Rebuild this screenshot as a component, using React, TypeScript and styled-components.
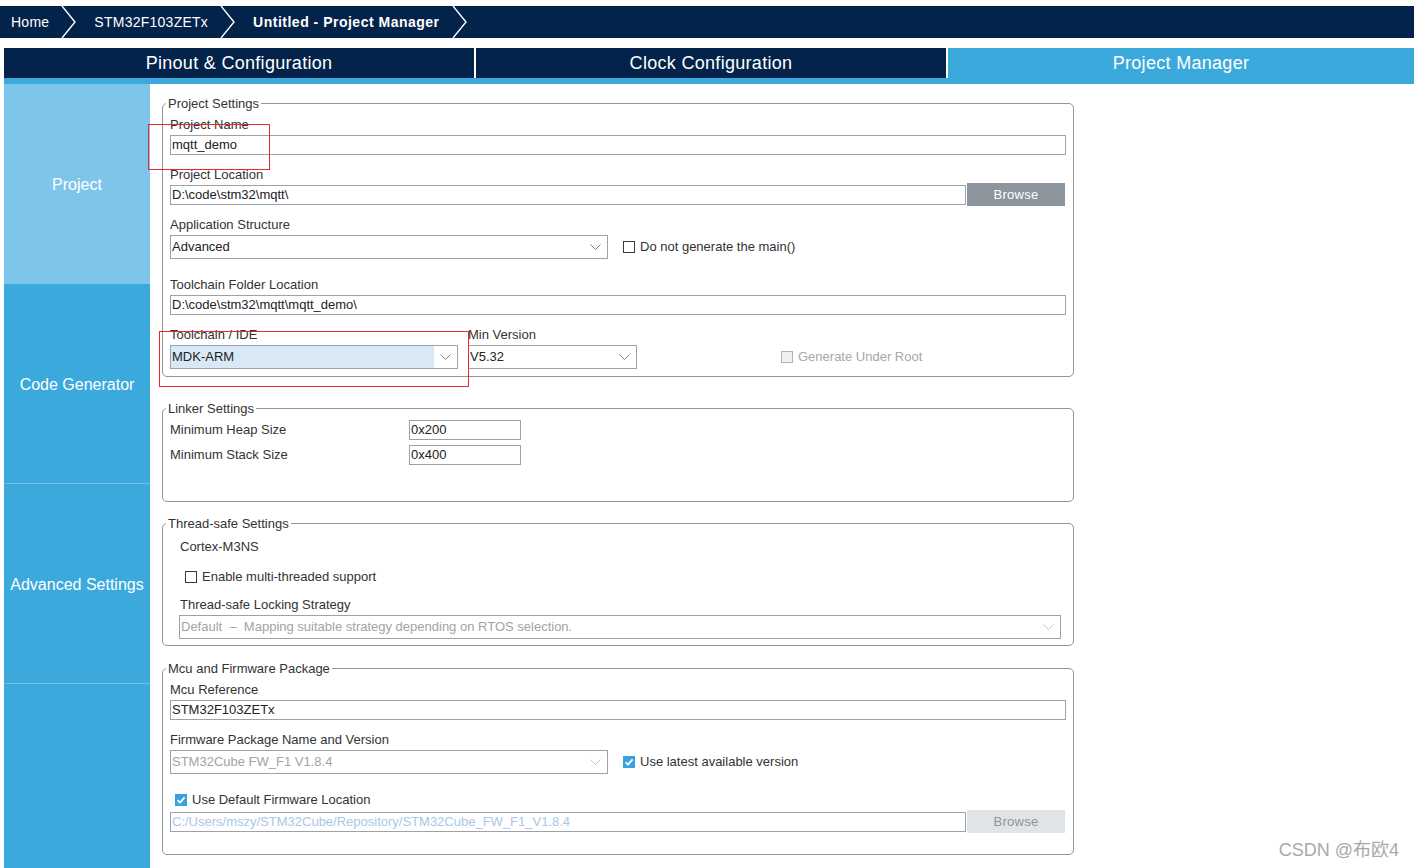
import styled, { createGlobalStyle } from 'styled-components'

const NAVY = '#03234b'
const BLUE = '#3ba9dc'
const LIGHT_BLUE = '#7dc6ea'
const FRAME = '#8f969c'
const FIELD_BORDER = '#9ca2a7'

const GlobalStyle = createGlobalStyle`
  html, body {
    margin: 0;
    padding: 0;
    background: #ffffff;
  }
  body {
    font-family: 'Liberation Sans', Arial, 'Noto Sans CJK SC', sans-serif;
  }
`

const Page = styled.div`
  position: relative;
  width: 1414px;
  height: 868px;
  overflow: hidden;
  background: #ffffff;
`

const TopBar = styled.div`
  margin-top: 6px;
  height: 32px;
  background: ${NAVY};
  display: flex;
  align-items: center;
  padding-left: 11px;
  color: #ffffff;
  font-size: 14px;
`

const Crumb = styled.span<{ $bold?: boolean }>`
  font-weight: ${p => (p.$bold ? 700 : 400)};
  letter-spacing: ${p => (p.$bold ? 0.5 : 0.25)}px;
  margin-right: 12px;
  white-space: nowrap;
`

const ChevronSvg = styled.svg`
  flex-shrink: 0;
  margin-right: 18px;
`

const Chevron = () => (
  <ChevronSvg width="15" height="32" viewBox="0 0 15 32">
    <polyline points="1,0 14,16 1,32" fill="none" stroke="#ffffff" strokeWidth="1.4" />
  </ChevronSvg>
)

const TabBar = styled.div`
  margin: 10px 0 0 4px;
  height: 30px;
  display: flex;
  gap: 2px;
`

const Tab = styled.div<{ $active?: boolean }>`
  flex: 0 0 ${p => (p.$active ? 466 : 470)}px;
  background: ${p => (p.$active ? BLUE : NAVY)};
  color: #ffffff;
  font-size: 18px;
  letter-spacing: 0.3px;
  display: flex;
  align-items: center;
  justify-content: center;
`

const TabStrip = styled.div`
  margin-left: 4px;
  height: 6px;
  background: ${BLUE};
`

const Body = styled.div`
  display: flex;
  margin-left: 4px;
  height: 784px;
`

const Sidebar = styled.div`
  width: 146px;
  flex-shrink: 0;
  display: flex;
  flex-direction: column;
  background: ${BLUE};
`

const SideItem = styled.div<{ $active?: boolean }>`
  height: 200px;
  flex-shrink: 0;
  box-sizing: border-box;
  padding-top: 2px;
  background: ${p => (p.$active ? LIGHT_BLUE : BLUE)};
  border-bottom: 1px solid ${p => (p.$active ? LIGHT_BLUE : '#72c0e6')};
  color: #ffffff;
  font-size: 16px;
  display: flex;
  align-items: center;
  justify-content: center;
`

const Content = styled.div`
  flex: 1;
  padding: 12px 0 0 12px;
`

const Group = styled.fieldset<{ $top?: number; $pad?: number; $bottom?: number }>`
  margin: ${p => p.$top ?? 0}px 0 0 0;
  width: 912px;
  min-width: 0;
  box-sizing: border-box;
  border: 1px solid ${FRAME};
  border-radius: 5px;
  padding: ${p => p.$pad ?? 6}px 7px ${p => p.$bottom ?? 7}px 7px;
`

const Legend = styled.legend`
  margin-left: -4px;
  padding: 0 2px;
  font-size: 13px;
  line-height: 15px;
  color: #333333;
`

const Label = styled.div<{ $top?: number; $gap?: number; $muted?: boolean }>`
  margin-top: ${p => p.$top ?? 0}px;
  margin-bottom: ${p => p.$gap ?? 2}px;
  font-size: 13px;
  line-height: 16px;
  color: ${p => (p.$muted ? '#a5a5a5' : '#333333')};
  white-space: nowrap;
`

const TextBox = styled.div<{ $width?: number; $tone?: 'normal' | 'link' }>`
  ${p => (p.$width ? `width: ${p.$width}px;` : 'flex: 1;')}
  height: 20px;
  box-sizing: border-box;
  border: 1px solid ${FIELD_BORDER};
  padding-left: 1px;
  font-size: 13px;
  line-height: 18px;
  color: ${p => (p.$tone === 'link' ? '#a9c7e8' : '#222222')};
  white-space: nowrap;
  overflow: hidden;
`

const Row = styled.div<{ $top?: number; $align?: string; $height?: number }>`
  display: flex;
  align-items: ${p => p.$align ?? 'center'};
  margin-top: ${p => p.$top ?? 0}px;
  ${p => (p.$height ? `height: ${p.$height}px;` : '')}
`

const BrowseButton = styled.div<{ $disabled?: boolean }>`
  width: 98px;
  height: 23px;
  margin: 0 1px 0 1px;
  flex-shrink: 0;
  background: ${p => (p.$disabled ? '#e1e4e7' : '#8c959d')};
  color: ${p => (p.$disabled ? '#8c959d' : '#ffffff')};
  font-size: 13px;
  letter-spacing: 0.3px;
  display: flex;
  align-items: center;
  justify-content: center;
`

const SelectBox = styled.div<{ $width: number; $shift?: number }>`
  width: ${p => p.$width}px;
  margin-left: ${p => p.$shift ?? 0}px;
  height: 24px;
  box-sizing: border-box;
  border: 1px solid ${FIELD_BORDER};
  display: flex;
  flex-shrink: 0;
  background: #ffffff;
`

const SelectValue = styled.div<{ $highlight?: boolean; $disabled?: boolean }>`
  flex: 1;
  padding-left: 1px;
  font-size: 13px;
  line-height: 22px;
  white-space: pre;
  overflow: hidden;
  background: ${p => (p.$highlight ? '#d9e8f5' : 'transparent')};
  color: ${p => (p.$disabled ? '#a3a3a3' : '#222222')};
`

const CaretCell = styled.div`
  width: 23px;
  display: flex;
  align-items: center;
  justify-content: center;
`

const Select = ({ value, width, shift, disabled, highlight }: {
  value: string
  width: number
  shift?: number
  disabled?: boolean
  highlight?: boolean
}) => (
  <SelectBox $width={width} $shift={shift}>
    <SelectValue $highlight={highlight} $disabled={disabled}>{value}</SelectValue>
    <CaretCell>
      <svg width="11" height="6" viewBox="0 0 11 6">
        <polyline points="0.5,0.5 5.5,5.5 10.5,0.5" fill="none" stroke={disabled ? '#c2c6ca' : '#7a7f84'} strokeWidth="1" />
      </svg>
    </CaretCell>
  </SelectBox>
)

const Check = styled.span<{ $checked?: boolean; $disabled?: boolean }>`
  width: 12px;
  height: 12px;
  flex-shrink: 0;
  box-sizing: border-box;
  border: 1px solid ${p => (p.$checked ? '#3aa2da' : p.$disabled ? '#aeb2b6' : '#3a3a3a')};
  background: ${p => (p.$checked ? '#3aa2da' : p.$disabled ? '#eef0f2' : '#ffffff')};
  display: inline-flex;
  align-items: center;
  justify-content: center;
`

const CheckLine = styled.label<{ $left?: number; $muted?: boolean }>`
  display: flex;
  align-items: center;
  gap: 5px;
  margin-left: ${p => p.$left ?? 0}px;
  font-size: 13px;
  line-height: 16px;
  color: ${p => (p.$muted ? '#a8a8a8' : '#333333')};
  white-space: nowrap;
`

const CheckItem = ({ text, checked, disabled, left }: { text: string; checked?: boolean; disabled?: boolean; left?: number }) => (
  <CheckLine $left={left} $muted={disabled}>
    <Check $checked={checked} $disabled={disabled}>
      {checked && (
        <svg width="10" height="10" viewBox="0 0 10 10">
          <polyline points="1.6,5.2 4,7.6 8.6,2.4" fill="none" stroke="#ffffff" strokeWidth="1.8" />
        </svg>
      )}
    </Check>
    {text}
  </CheckLine>
)

const Column = styled.div<{ $width?: number; $left?: number }>`
  display: flex;
  flex-direction: column;
  ${p => (p.$width ? `width: ${p.$width}px;` : '')}
  margin-left: ${p => p.$left ?? 0}px;
`

const LinkerGrid = styled.div`
  display: grid;
  grid-template-columns: 239px 112px;
  row-gap: 5px;
  align-items: center;
`

const Indent = styled.div`
  padding-left: 10px;
`

const Annotation = styled.div<{ $x: number; $y: number; $w: number; $h: number }>`
  position: absolute;
  left: ${p => p.$x}px;
  top: ${p => p.$y}px;
  width: ${p => p.$w}px;
  height: ${p => p.$h}px;
  box-sizing: border-box;
  border: 1px solid #e8292d;
  pointer-events: none;
`

const Watermark = styled.div`
  position: absolute;
  right: 15px;
  top: 835px;
  font-size: 18px;
  color: #a9a9a9;
  font-family: 'Liberation Sans', Arial, 'Noto Sans CJK SC', sans-serif;
`

function App() {
  return (
    <Page>
      <GlobalStyle />
      <TopBar>
        <Crumb>Home</Crumb>
        <Chevron />
        <Crumb>STM32F103ZETx</Crumb>
        <Chevron />
        <Crumb $bold>Untitled - Project Manager</Crumb>
        <Chevron />
      </TopBar>

      <TabBar>
        <Tab>Pinout &amp; Configuration</Tab>
        <Tab>Clock Configuration</Tab>
        <Tab $active>Project Manager</Tab>
      </TabBar>
      <TabStrip />

      <Body>
        <Sidebar>
          <SideItem $active>Project</SideItem>
          <SideItem>Code Generator</SideItem>
          <SideItem>Advanced Settings</SideItem>
        </Sidebar>

        <Content>
          <Group>
            <Legend>Project Settings</Legend>
            <Label>Project Name</Label>
            <Row>
              <TextBox>mqtt_demo</TextBox>
            </Row>

            <Label $top={12} $gap={0}>Project Location</Label>
            <Row>
              <TextBox>D:\code\stm32\mqtt\</TextBox>
              <BrowseButton>Browse</BrowseButton>
            </Row>

            <Label $top={11}>Application Structure</Label>
            <Row>
              <Select value="Advanced" width={438} />
              <CheckItem text="Do not generate the main()" left={15} />
            </Row>

            <Label $top={18}>Toolchain Folder Location</Label>
            <Row>
              <TextBox>D:\code\stm32\mqtt\mqtt_demo\</TextBox>
            </Row>

            <Row $top={12} $align="flex-end">
              <Column $width={288}>
                <Label>Toolchain / IDE</Label>
                <Select value="MDK-ARM" width={288} highlight />
              </Column>
              <Column $left={10}>
                <Label>Min Version</Label>
                <Select value="V5.32" width={169} />
              </Column>
              <Column $left={144}>
                <Row $height={24}>
                  <CheckItem text="Generate Under Root" disabled />
                </Row>
              </Column>
            </Row>
          </Group>

          <Group $top={24} $pad={4} $bottom={36}>
            <Legend>Linker Settings</Legend>
            <LinkerGrid>
              <Label $gap={0}>Minimum Heap Size</Label>
              <TextBox $width={112}>0x200</TextBox>
              <Label $gap={0}>Minimum Stack Size</Label>
              <TextBox $width={112}>0x400</TextBox>
            </LinkerGrid>
          </Group>

          <Group $top={14} $bottom={6}>
            <Legend>Thread-safe Settings</Legend>
            <Indent>
              <Label $top={2} $gap={0}>Cortex-M3NS</Label>
              <Row $top={14}>
                <CheckItem text="Enable multi-threaded support" left={5} />
              </Row>
              <Label $top={12}>Thread-safe Locking Strategy</Label>
              <Select
                value={'Default  \u2013  Mapping suitable strategy depending on RTOS selection.'}
                width={882}
                shift={-1}
                disabled
              />
            </Indent>
          </Group>

          <Group $top={15} $bottom={21}>
            <Legend>Mcu and Firmware Package</Legend>
            <Label>Mcu Reference</Label>
            <Row>
              <TextBox>STM32F103ZETx</TextBox>
            </Row>

            <Label $top={12}>Firmware Package Name and Version</Label>
            <Row>
              <Select value="STM32Cube FW_F1 V1.8.4" width={438} disabled />
              <CheckItem text="Use latest available version" checked left={15} />
            </Row>

            <Row $top={18}>
              <CheckItem text="Use Default Firmware Location" checked left={5} />
            </Row>
            <Row $top={2}>
              <TextBox $tone="link">C:/Users/mszy/STM32Cube/Repository/STM32Cube_FW_F1_V1.8.4</TextBox>
              <BrowseButton $disabled>Browse</BrowseButton>
            </Row>
          </Group>
        </Content>
      </Body>

      <Annotation $x={148} $y={124} $w={122} $h={46} />
      <Annotation $x={159} $y={331} $w={310} $h={56} />
      <Watermark>CSDN @布欧4</Watermark>
    </Page>
  )
}

export default App
